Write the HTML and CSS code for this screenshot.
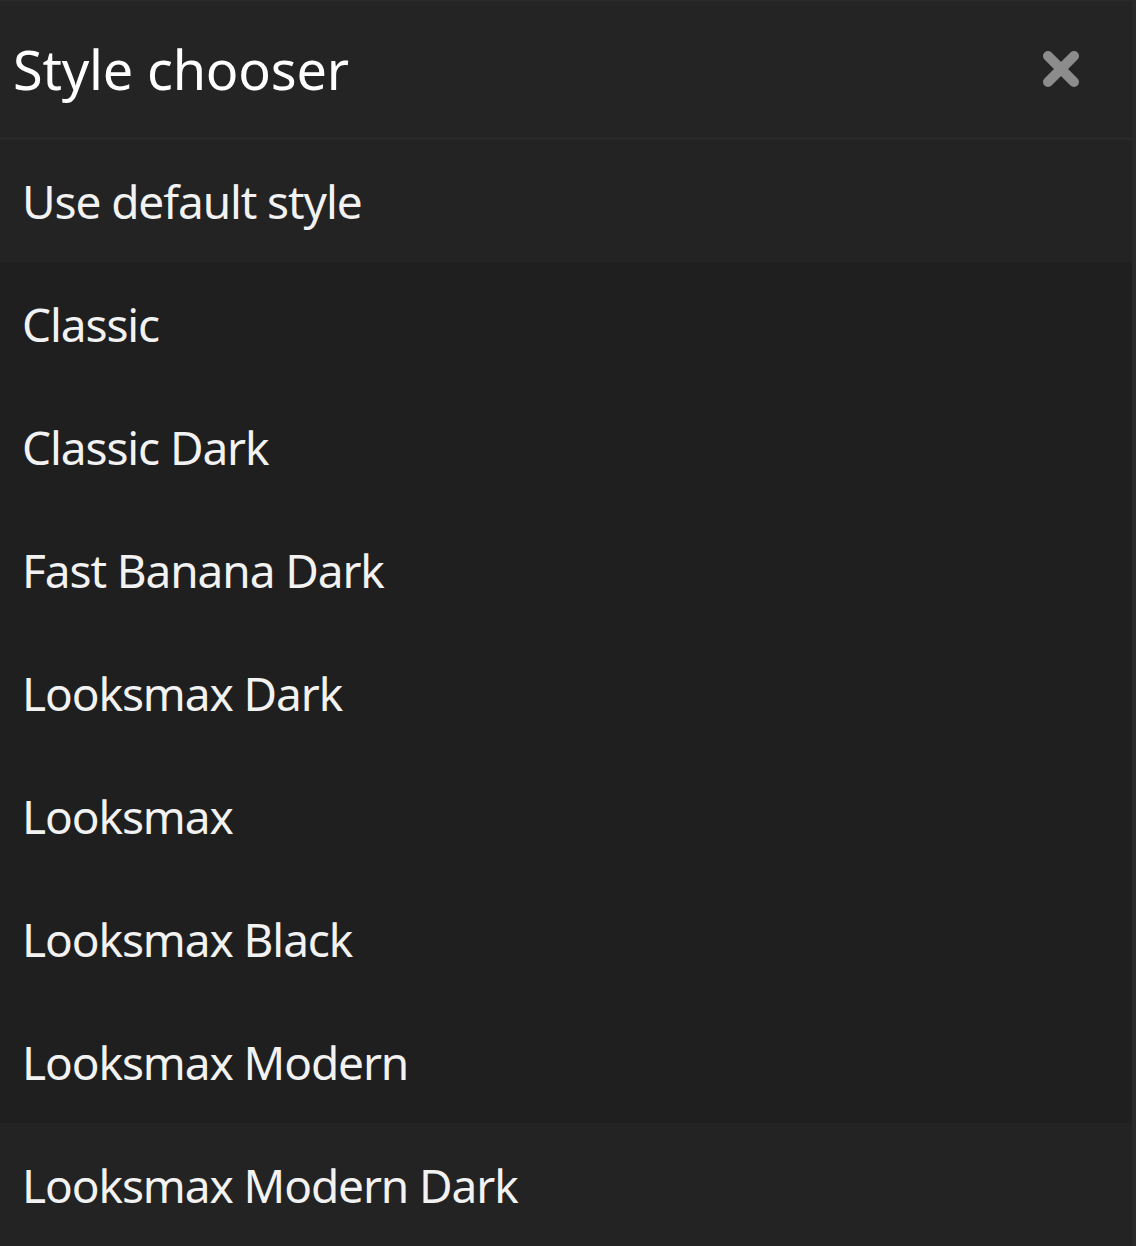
FILE: index.html
```html
<!DOCTYPE html>
<html>
<head>
<title>Style chooser</title>
<link rel="stylesheet" href="styles.css">
</head>
<body>
<div id="chooser">
    <div class="chooser-header">
        <h2 class="chooser-title">Style chooser</h2>
        <span class="chooser-close">
            <svg width="38" height="38" viewBox="0 0 38 38">
                <path d="M6 6 L32 32 M32 6 L6 32" stroke="#8c8c8c" stroke-width="10" stroke-linecap="round"/>
            </svg>
        </span>
    </div>
    <ul class="style-list">
        <li class="style-item is-active">Use default style</li>
        <li class="style-item">Classic</li>
        <li class="style-item">Classic Dark</li>
        <li class="style-item">Fast Banana Dark</li>
        <li class="style-item">Looksmax Dark</li>
        <li class="style-item">Looksmax</li>
        <li class="style-item">Looksmax Black</li>
        <li class="style-item">Looksmax Modern</li>
        <li class="style-item is-active">Looksmax Modern Dark</li>
    </ul>
</div>
</body>
</html>
```

FILE: styles.css
```css
body {
    margin: 0;
    background-color: #1f1f1f;
    font-family: "Noto Sans", sans-serif;
    color: #f2f2f2;
}

#chooser {
    width: 1136px;
    height: 1246px;
    overflow: hidden;
    box-sizing: border-box;
    border-top: 1px solid #2a2a2a;
    border-right: 4px solid #2a2a2a;
}

.chooser-header {
    display: flex;
    align-items: center;
    justify-content: space-between;
    height: 136px;
    padding: 0 52px 0 13px;
    background-color: #242424;
    border-bottom: 3px solid #292929;
}

.chooser-title {
    margin: 0;
    font-size: 54px;
    font-weight: normal;
    color: #ffffff;
    line-height: 1;
    letter-spacing: -0.2px;
}

.chooser-close {
    display: flex;
    width: 38px;
    height: 38px;
}

.style-list {
    list-style: none;
    margin: 0;
    padding: 0;
}

.style-item {
    display: flex;
    align-items: center;
    height: 123px;
    padding: 0 22px;
    font-size: 46px;
    line-height: 1;
    letter-spacing: -1.1px;
    background-color: #1f1f1f;
}

.style-item.is-active {
    background-color: #232323;
}

.style-item:first-child {
    height: 122px;
}
```
